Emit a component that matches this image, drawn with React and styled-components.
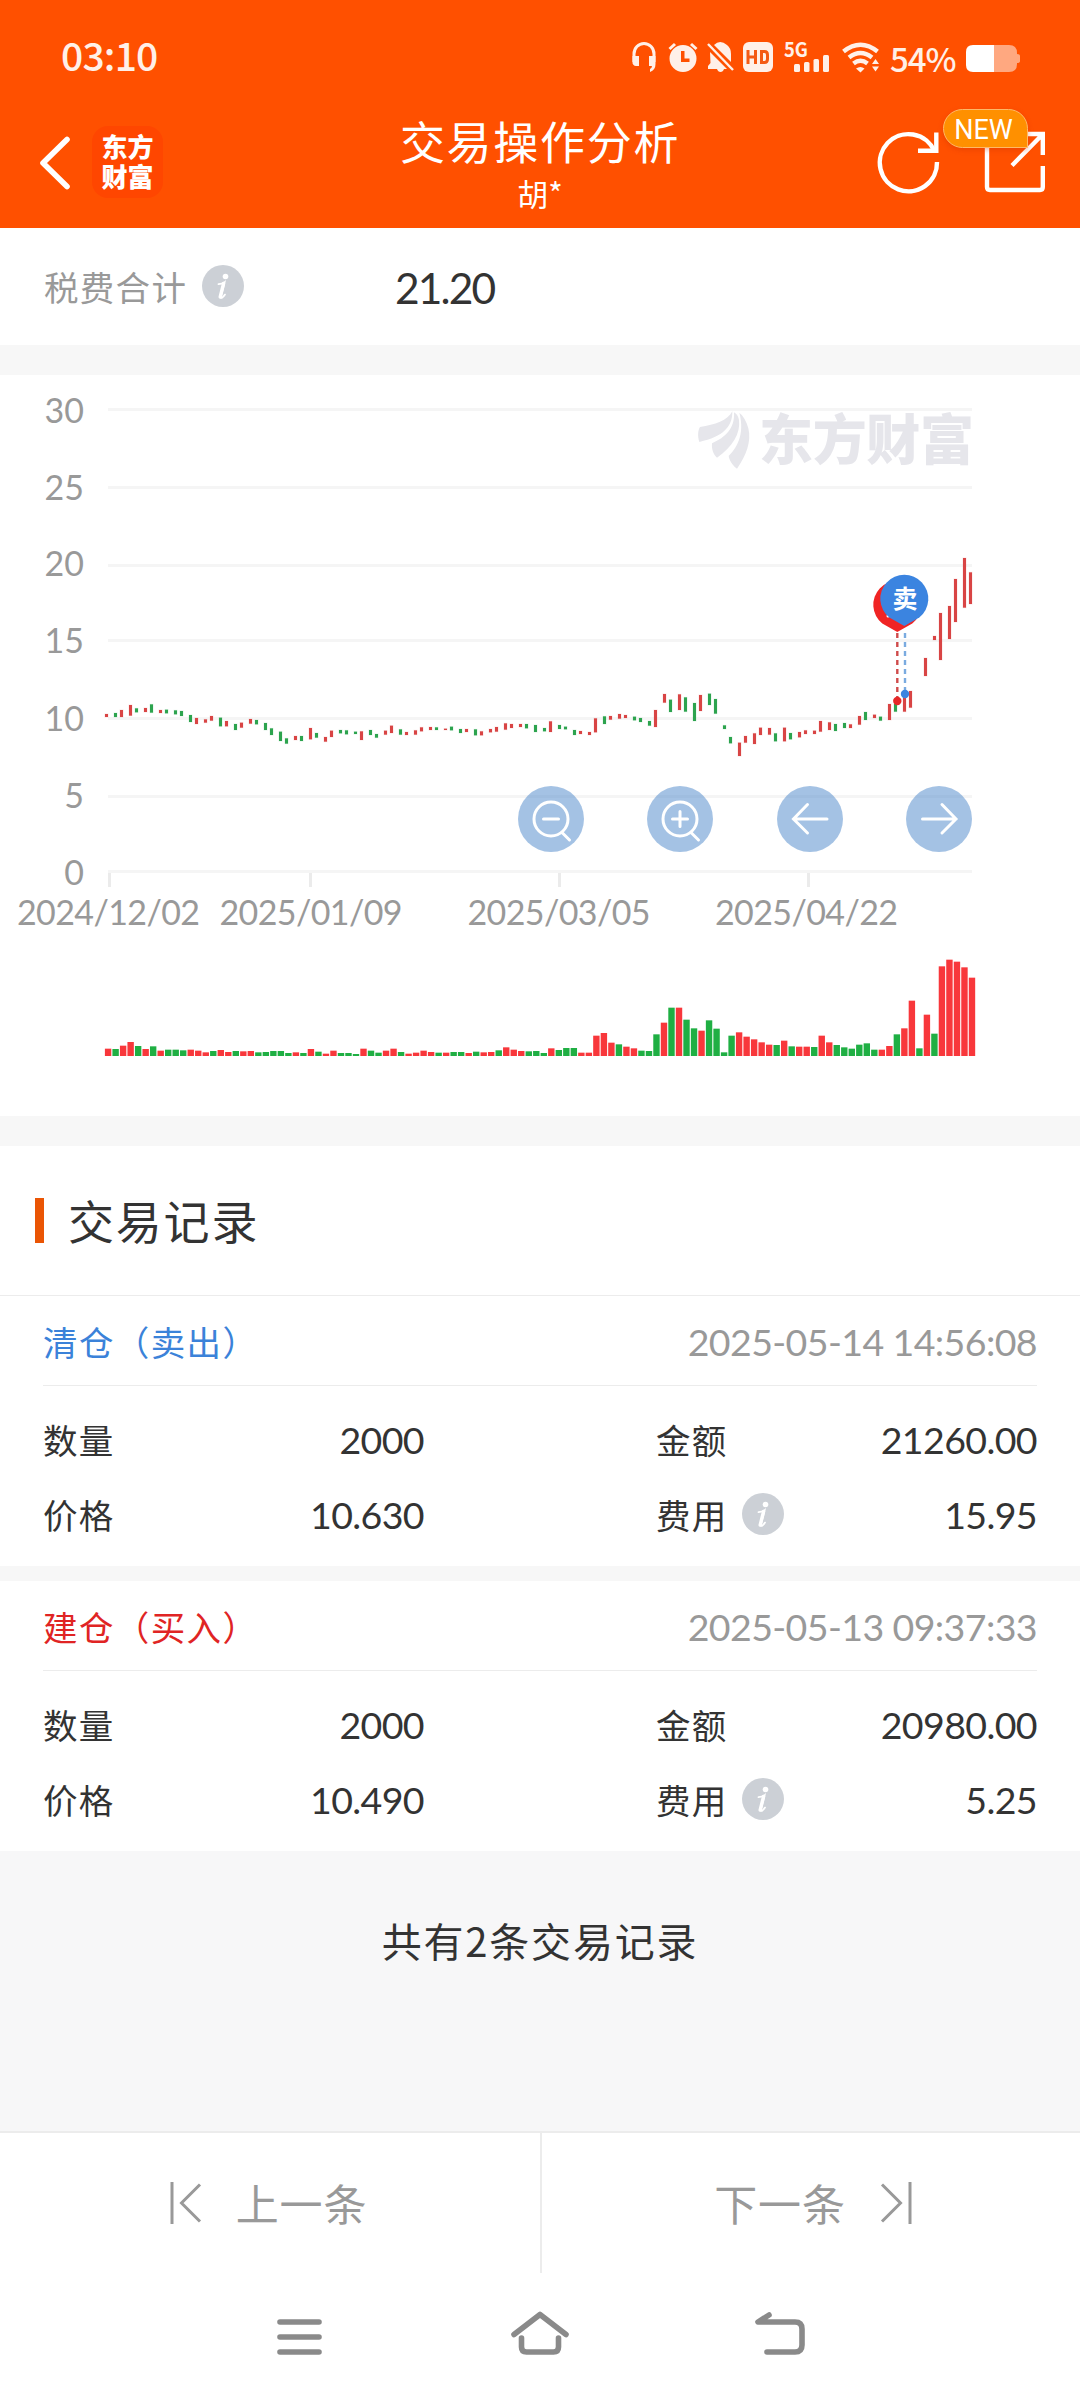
import React from "react";
import styled, { createGlobalStyle } from "styled-components";

const NUMERIC = 'Lato, "Noto Sans CJK SC", sans-serif';

const GlobalStyle = createGlobalStyle`
  * { box-sizing: border-box; }
  body { margin: 0; background: #f7f7f7; }
  body, text { font-family: "Noto Sans CJK SC", "Noto Sans", sans-serif; }
`;

const Page = styled.div`
  width: 1080px;
  height: 2400px;
  display: flex;
  flex-direction: column;
  background: #f7f7f7;
  color: #333;
  overflow: hidden;
  white-space: nowrap;
`;

const Header = styled.header`
  height: 228px;
  flex: none;
  display: flex;
  flex-direction: column;
  background: #ff5000;
  color: #fff;
`;

const StatusBar = styled.div`
  height: 109px;
  padding: 0 60px 0 61px;
  display: flex;
  align-items: flex-start;
  color: #fff0e8;
`;

const Clock = styled.span`
  margin-top: 35px;
  font-size: 39px;
  line-height: 38px;
  font-weight: 500;
  letter-spacing: -0.8px;
  flex: 1;
`;

const StatusIcon = styled.svg`
  flex: none;
  width: ${(p) => p.$w}px;
  height: 32px;
  margin: 41px ${(p) => p.$gap}px 0 0;
  overflow: visible;
  fill: currentColor;
`;

const BatteryText = styled.span`
  width: 76px;
  margin-top: 41px;
  font-size: 33px;
  line-height: 34px;
  font-weight: 500;
  letter-spacing: -1px;
`;

const TitleBar = styled.div`
  height: 119px;
  display: grid;
  grid-template-columns: 300px 1fr 300px;
`;

const TitleLeft = styled.div`
  display: flex;
  padding: 17px 0 0 38px;
`;

const BackIcon = styled.svg`
  width: 34px;
  height: 56px;
  margin: 9px 20px 0 0;
`;

const Brand = styled.div`
  width: 71px;
  height: 72px;
  padding: 7px 0 0;
  display: flex;
  flex-direction: column;
  align-items: center;
  border-radius: 16px;
  background: #ff4600;
  font: 900 26px/30px "Liberation Sans", "Noto Sans CJK SC", sans-serif;
`;

const TitleCenter = styled.div`
  display: flex;
  flex-direction: column;
  align-items: center;
`;

const Title = styled.h1`
  margin: 4px 0 0;
  font-size: 45px;
  line-height: 56px;
  font-weight: 400;
  letter-spacing: 1.7px;
`;

const Subtitle = styled.span`
  margin-top: 5px;
  font-size: 31px;
  line-height: 38px;
`;

const TitleRight = styled.div`
  position: relative;
  display: flex;
  padding: 20px 0 0 96px;
  gap: 42px;
`;

const ActionIcon = styled.svg`
  width: 66px;
  height: 68px;
  fill: none;
  stroke: #fff;
  stroke-width: 4.4;
`;

const NewBadge = styled.span`
  position: absolute;
  left: 163px;
  top: 0;
  width: 85px;
  height: 39px;
  padding-right: 4px;
  border: 1px solid #ffb866;
  border-radius: 20px 20px 0 20px;
  background: #ff9000;
  box-shadow: 0 2px 5px rgba(200, 50, 0, 0.35);
  font: 400 27px/40px Roboto, sans-serif;
  text-align: center;
`;

const FeeRow = styled.div`
  height: 117px;
  flex: none;
  display: flex;
  align-items: center;
  padding: 0 44px;
  background: #fff;
`;

const FeeLabel = styled.span`
  width: 158px;
  margin-top: -1px;
  color: #999;
  font-size: 34.5px;
  letter-spacing: 1.3px;
`;

const FeeValue = styled.span`
  margin: 1px 0 0 151px;
  font-family: ${NUMERIC};
  font-size: 42.5px;
  letter-spacing: -1.9px;
`;

const InfoSvg = styled.svg`
  width: 42px;
  height: 42px;
  flex: none;
  margin-top: ${(p) => p.$shift || 0}px;
`;

const Band = styled.div`
  height: ${(p) => p.$h}px;
  flex: none;
`;

const ChartPanel = styled.section`
  position: relative;
  height: 741px;
  flex: none;
  background: #fff;
`;

const ChartSvg = styled.svg`
  display: block;
  width: 1080px;
  height: 741px;
`;

const AxisText = styled.text`
  && { font-family: ${NUMERIC}; }
  font-size: ${(p) => p.$size}px;
  fill: #999;
`;

const ChartTools = styled.div`
  position: absolute;
  left: 518px;
  top: 411px;
  width: 454px;
  display: flex;
  justify-content: space-between;
`;

const ToolButton = styled.button`
  width: 66px;
  height: 66px;
  padding: 0;
  border: 0;
  border-radius: 50%;
  background: rgba(73, 133, 201, 0.5);
  svg {
    display: block;
    width: 66px;
    height: 66px;
    fill: none;
    stroke: #fff;
    stroke-width: 3;
    stroke-linecap: round;
  }
`;

const SectionHead = styled.div`
  height: 150px;
  flex: none;
  display: flex;
  align-items: center;
  padding: 0 35px;
  gap: 25px;
  border-bottom: 1px solid #ececec;
  background: #fff;
`;

const Accent = styled.i`
  width: 9px;
  height: 45px;
  background: #ea5504;
`;

const SectionTitle = styled.h2`
  margin: -3px 0 0 -1px;
  font-size: 46px;
  font-weight: 400;
  letter-spacing: 1.8px;
`;

const Record = styled.article`
  height: 270px;
  flex: none;
  padding: 0 43px;
  background: #fff;
`;

const RecordHead = styled.div`
  height: 90px;
  display: flex;
  justify-content: space-between;
  align-items: center;
  border-bottom: 1px solid #ececec;
`;

const RecordKind = styled.span`
  color: ${(p) => p.$color};
  font-size: 34.5px;
  letter-spacing: 1.4px;
`;

const RecordTime = styled.time`
  margin-top: 2px;
  color: #999;
  font-family: ${NUMERIC};
  font-size: 37.5px;
  letter-spacing: -0.6px;
`;

const RecordGrid = styled.div`
  display: grid;
  grid-template-columns: 381px 381px;
  grid-auto-rows: 75px;
  justify-content: space-between;
  padding-top: 15px;
`;

const Field = styled.div`
  display: flex;
  align-items: center;
`;

const FieldName = styled.span`
  width: 86px;
  font-size: 34.5px;
  letter-spacing: 1.3px;
`;

const FieldValue = styled.span`
  margin: 2px 0 0 auto;
  font-family: ${NUMERIC};
  font-size: 37.5px;
  letter-spacing: -0.6px;
`;

const Summary = styled.div`
  flex: 1;
  padding-top: 60px;
  background: #f7f7f8;
  font-size: 40px;
  line-height: 58px;
  letter-spacing: 1.8px;
  text-align: center;
`;

const Pager = styled.div`
  height: 142px;
  flex: none;
  display: grid;
  grid-template-columns: 542px 538px;
  border-top: 2px solid #ececec;
  background: #fff;
`;

const PageButton = styled.div`
  display: flex;
  align-items: center;
  justify-content: center;
  gap: 34px;
  padding-left: ${(p) => (p.$divided ? 0 : 4)}px;
  padding-right: ${(p) => (p.$divided ? 3 : 0)}px;
  color: #999;
  font-size: 43px;
  letter-spacing: 0.8px;
  border-right: ${(p) => (p.$divided ? "2px solid #ececec" : "0")};
  span { margin-top: -2px; }
  svg {
    width: 32px;
    height: 44px;
    fill: none;
    stroke: #999;
    stroke-width: 3;
  }
`;

const SystemNav = styled.nav`
  height: 127px;
  flex: none;
  display: flex;
  justify-content: space-between;
  padding: 35px 271px 0 270px;
  background: #fff;
  svg {
    width: 60px;
    height: 50px;
    fill: none;
    stroke: #8a8a8a;
    stroke-width: 5.6;
    stroke-linecap: round;
    stroke-linejoin: round;
  }
`;

/* direction, top and bottom of each daily candle, on a scale of three units per pixel */
const CANDLES = [
  "r222,231 g219,231 r210,231 r195,227 g205,217 r204,216 g193,218 r210,219 g209,220 g211,223 g213,228 g225,246 r234,252 r238,248 r228,242 g233,259 r243,259 g252,270 r248,263 r237,251",
  "g240,253 g249,270 g265,285 g275,303 g295,311 r288,300 g288,303 r264,298 g279,293 r291,305 r272,291 g270,280 g271,283 g275,282 r274,300 g270,285 g282,293 r272,284 r257,279 g268,284",
  "r276,285 r271,284 r262,274 r261,270 g262,270 r266,270 g260,271 g267,279 r267,276 g268,286 r274,286 r267,277 r261,275 r250,269 r252,264 r252,261 g252,265 g255,276 g264,274 r244,276",
  "g255,267 g260,268 g270,285 r273,282 r276,285 r235,277 g229,252 r228,239 r222,236 r225,234 g230,241 g234,246 g243,257 r210,261 r162,188 g179,216 r163,210 g172,215 g189,243 r165,213",
  "g161,195 g177,221 g256,267 g291,310 r308,348 r288,308 r280,312 r263,285 r264,284 g280,304 r263,304 g279,298 r276,292 r271,282 r272,282 r243,275 r247,270 g252,273 g249,264 r253,264",
  "r228,254 g216,240 r224,234 g230,242 r192,240 g192,215 r170,215 r153,203 r0,0 r54,108 r-12,0 r-81,60 r-102,-3 r-183,-54 r-246,-97 r-203,-108",
]
  .join(" ")
  .split(" ")
  .map((s) => {
    const [top, bottom] = s.slice(1).split(",").map(Number);
    return { up: s[0] === "r", top: 265 + top / 3, bottom: 265 + bottom / 3 };
  });

const candleX = (i) =>
  i < 58
    ? 105 + 15 * Math.floor(i / 2) + (i % 2) * 9
    : 543 + 15 * Math.floor((i - 58) / 2) + (i % 2) * 6;

const VOLUMES = (
  "r22 g21 r31 r42 g30 r21 g29 r16 g19 g19 g17 r19 r16 r11 g15 r18 r12 g15 r14 r15 " +
  "g11 g12 g15 g15 g9 r11 g9 r21 g13 r7 r16 g9 g9 g6 r22 g16 g10 r16 r22 g12 " +
  "r7 r10 r16 r12 g10 r10 g12 g12 r9 g13 r11 r12 g17 r26 r19 r15 g14 g15 g9 r23 " +
  "g18 g24 g24 r10 r10 r61 r69 r40 g35 r28 r23 g16 g15 g65 r100 g145 r145 g109 g83 r76 " +
  "g107 g82 g11 g61 r71 r58 r50 r41 r34 g33 r46 g29 r28 r28 g27 r61 r41 g33 g26 g22 " +
  "g34 g38 g19 r19 r30 g65 r83 r166 g23 r124 g67 r269 r289 r283 r266 r235"
)
  .split(" ")
  .map((s) => ({ up: s[0] === "r", h: Number(s.slice(1)) / 3 }));

/* value, line position, baseline of the label */
const GRID = [
  [30, 33, 47.5],
  [25, 111, 124.5],
  [20, 189, 201],
  [15, 264, 278],
  [10, 342, 355.5],
  [5, 420, 432.5],
  [0, 495, 509.5],
];

const DATES = [
  ["2024/12/02", 108, 109],
  ["2025/01/09", 310.5, 310],
  ["2025/03/05", 558.5, 559],
  ["2025/04/22", 806, 808],
];

function Info({ shift }) {
  return (
    <InfoSvg viewBox="0 0 42 42" $shift={shift}>
      <circle cx="21" cy="21" r="21" fill="#ccd0d6" />
      <circle cx="23.5" cy="11.5" r="2.8" fill="#fff" />
      <path
        d="M16.5 19.2 Q20 19 22.6 17.2 L19 31.2 Q18.6 33.4 20 32.8 Q21.5 32 23 29.6"
        fill="none"
        stroke="#fff"
        strokeWidth="1.8"
        strokeLinecap="round"
      />
      <path d="M21.6 18.5 L18.200 32" stroke="#fff" strokeWidth="3.4" strokeLinecap="round" />
    </InfoSvg>
  );
}

function Pin({ x, y, color, children }) {
  return (
    <g>
      <path
        d={`M${x} ${y + 27} L${x - 15} ${y + 18.5} A24 24 0 1 1 ${x + 15} ${y + 18.5} Z`}
        fill={color}
      />
      {children}
    </g>
  );
}

function TradeChart() {
  return (
    <ChartSvg viewBox="0 0 1080 741">
      {GRID.map(([label, y, baseline]) => (
        <g key={label}>
          <rect x="108" y={y} width="864" height="3" fill="#f5f5f5" />
          <AxisText $size={34} x="84" y={baseline} textAnchor="end">
            {label}
          </AxisText>
        </g>
      ))}
      <g fill="#e6e6eb">
        <g transform="translate(660 5) scale(0.33333)">
          <path d="M118 186 C112 168 114 150 120 141 C165 134 203 122 217 94 C218 140 190 170 118 186Z" />
          <path d="M222 97 C225 145 197 172 156 190 C154 210 162 225 171 233 C218 200 242 160 237 120 C235 108 229 101 222 97Z" />
          <path d="M238 98 C256 165 228 205 206 228 C209 246 222 260 231 266 C258 228 275 185 265 145 C260 124 250 108 238 98Z" />
        </g>
        <text x="759" y="85" fontSize="54" fontWeight="900" textLength="215">
          东方财富
        </text>
      </g>
      {DATES.map(([label, center, tick]) => (
        <g key={label}>
          <rect x={tick - 1} y="498" width="3" height="14" fill="#ebebeb" />
          <AxisText $size={34} x={center - 91} y="550" textLength="183">
            {label}
          </AxisText>
        </g>
      ))}
      {CANDLES.map((c, i) => (
        <rect
          key={i}
          x={candleX(i)}
          y={c.top}
          width="3"
          height={c.bottom - c.top}
          fill={c.up ? "#d94545" : "#2da44e"}
          stroke={c.up ? "#d94545" : "#2da44e"}
          strokeOpacity={c.bottom > c.top ? 0.15 : 0}
        />
      ))}
      {VOLUMES.map((v, i) => (
        <rect
          key={i}
          x={104.9 + i * 7.512}
          y={681 - v.h}
          width="6.4"
          height={v.h}
          fill={v.up ? "#f8373b" : "#1faf43"}
        />
      ))}
      <path d="M897.3 258V324" stroke="#cf4a4a" strokeWidth="2.4" strokeDasharray="5 4" />
      <path d="M905 258V316" stroke="#7aabe0" strokeWidth="2.4" strokeDasharray="5 4" />
      <circle cx="897.3" cy="326" r="4.2" fill="#e62828" />
      <circle cx="905" cy="319" r="4.2" fill="#3b84e0" />
      <Pin x={897.3} y={230} color="#f02424">
        <circle cx="888" cy="241" r="1.5" fill="#fff" />
      </Pin>
      <Pin x={904.3} y={224} color="#3b84e0">
        <text x="905" y="233" fontSize="25" fontWeight="700" fill="#fff" textAnchor="middle">
          卖
        </text>
      </Pin>
    </ChartSvg>
  );
}

function TradeRecord({ kind, color, time, quantity, amount, price, fee }) {
  return (
    <Record>
      <RecordHead>
        <RecordKind $color={color}>{kind}</RecordKind>
        <RecordTime>{time}</RecordTime>
      </RecordHead>
      <RecordGrid>
        <Field>
          <FieldName>数量</FieldName>
          <FieldValue>{quantity}</FieldValue>
        </Field>
        <Field>
          <FieldName>金额</FieldName>
          <FieldValue>{amount}</FieldValue>
        </Field>
        <Field>
          <FieldName>价格</FieldName>
          <FieldValue>{price}</FieldValue>
        </Field>
        <Field>
          <FieldName>费用</FieldName>
          <Info />
          <FieldValue>{fee}</FieldValue>
        </Field>
      </RecordGrid>
    </Record>
  );
}

function StatusIcons() {
  return (
    <>
      <StatusIcon $w={24} $gap={12} viewBox="0 0 24 32">
        <path
          d="M2 21V13A10 10.5 0 0 1 22 13V21"
          fill="none"
          stroke="currentColor"
          strokeWidth="3"
        />
        <path d="M0.5 15H7V25H4A3.5 3.5 0 0 1 .5 21ZM17 15H23.5V23Q23.500 29 18 31V28Q20 27 20 25H17Z" />
      </StatusIcon>
      <StatusIcon $w={30} $gap={9} viewBox="0 0 30 32">
        <path fillRule="evenodd" d="M15 4A13.500 13.500 0 1 0 15 31A13.500 13.500 0 0 0 15 4ZM13 10H16.500V17.500H21.500V21H13Z" />
        <path d="M1.500 8L7 3M28.500 8L23 3" stroke="currentColor" strokeWidth="3" />
      </StatusIcon>
      <StatusIcon $w={27} $gap={9} viewBox="0 0 27 32">
        <path d="M3 11L20 28H17Q16 31 13.500 31T10 28H1V25L3.500 22ZM7 4Q13-2 20 4Q24 7 24 13V21Z" />
        <path d="M1 3L26 29" stroke="currentColor" strokeWidth="2.4" />
      </StatusIcon>
      <StatusIcon $w={30} $gap={12} viewBox="0 0 30 32">
        <rect y="1" width="30" height="30" rx="6" />
        <path
          d="M5 9V23M12.500 9V23M5 16H12.500M18.500 10.500V21.500H21.500Q24.500 21.500 24.500 18V14Q24.500 10.500 21.500 10.500Z"
          fill="none"
          stroke="#f45a14"
          strokeWidth="3"
        />
      </StatusIcon>
      <StatusIcon $w={45} $gap={12} viewBox="0 0 45 32">
        <text x="-1" y="16" fontSize="20.5" fontWeight="700" textLength="24" lengthAdjust="spacingAndGlyphs">
          5G
        </text>
        <rect x="9" y="23" width="6" height="8" rx="1.500" />
        <rect x="19" y="21" width="5.500" height="10" rx="1.500" />
        <rect x="28.500" y="18" width="5.500" height="13" rx="1.500" />
        <rect x="38" y="14" width="6" height="17" rx="1.500" />
      </StatusIcon>
      <StatusIcon $w={37} $gap={11} viewBox="0 0 37 32">
        <g fill="none" stroke="currentColor" strokeWidth="4.400">
          <path d="M1.500 10.500Q18.500-3 35.500 10.500" />
          <path d="M7 16.500Q18.500 7.500 30 16.500" />
          <path d="M11.500 22.500Q18.500 17 25.500 22.500" />
        </g>
        <path d="M14 27.500Q18.500 24.500 22.500 27.500L18.500 31.500ZM30 23L33.500 18L37 23ZM30 25.500H37L33.500 30.500Z" />
      </StatusIcon>
    </>
  );
}

export default function App() {
  return (
    <Page>
      <GlobalStyle />
      <Header>
        <StatusBar>
          <Clock>03:10</Clock>
          <StatusIcons />
          <BatteryText>54%</BatteryText>
          <StatusIcon $w={54} $gap={0} viewBox="0 0 54 32">
            <path d="M26 4H43Q51 4 51 12V13Q54 13 54 15V20Q54 22 51 22V23Q51 31 43 31H26Z" fill="#ffa880" />
            <path d="M28 4H7Q0 4 0 11V24Q0 31 7 31H28Z" fill="#fff" />
          </StatusIcon>
        </StatusBar>
        <TitleBar>
          <TitleLeft>
            <BackIcon viewBox="0 0 34 56">
              <path
                d="M29 4.500L5 28L29 51.500"
                fill="none"
                stroke="#fff"
                strokeWidth="5.6"
                strokeLinecap="round"
                strokeLinejoin="round"
              />
            </BackIcon>
            <Brand>
              <span>东方</span>
              <span>财富</span>
            </Brand>
          </TitleLeft>
          <TitleCenter>
            <Title>交易操作分析</Title>
            <Subtitle>胡*</Subtitle>
          </TitleCenter>
          <TitleRight>
            <ActionIcon viewBox="0 0 66 68">
              <path d="M61 33A28.600 28.600 0 1 1 58.500 22" />
              <path d="M60.300 3.500V21.700H42" />
            </ActionIcon>
            <ActionIcon viewBox="0 0 66 68">
              <path d="M40 5H58.800V26M58.800 37V58Q58.800 61 56 61H6Q3 61 3 58V12M58 6L28 36.500" />
            </ActionIcon>
            <NewBadge>NEW</NewBadge>
          </TitleRight>
        </TitleBar>
      </Header>

      <FeeRow>
        <FeeLabel>税费合计</FeeLabel>
        <Info shift={-2} />
        <FeeValue>21.20</FeeValue>
      </FeeRow>
      <Band $h={30} />

      <ChartPanel>
        <TradeChart />
        <ChartTools>
          <ToolButton>
            <svg viewBox="0 0 66 66">
              <circle cx="33" cy="33" r="17" />
              <path d="M25.500 33H40.500M44.500 47L51.500 54" />
            </svg>
          </ToolButton>
          <ToolButton>
            <svg viewBox="0 0 66 66">
              <circle cx="33" cy="33" r="17" />
              <path d="M25.500 33H40.500M33 25.500V40.500M44.500 47L51.500 54" />
            </svg>
          </ToolButton>
          <ToolButton>
            <svg viewBox="0 0 66 66">
              <path d="M50 33H16.500M30.500 18.500L16.500 33L30.500 47" />
            </svg>
          </ToolButton>
          <ToolButton>
            <svg viewBox="0 0 66 66">
              <path d="M16.500 33H50M36 18.500L50 33L36 47" />
            </svg>
          </ToolButton>
        </ChartTools>
      </ChartPanel>
      <Band $h={30} />

      <SectionHead>
        <Accent />
        <SectionTitle>交易记录</SectionTitle>
      </SectionHead>
      <TradeRecord
        kind="清仓（卖出）"
        color="#3b82d9"
        time="2025-05-14 14:56:08"
        quantity="2000"
        amount="21260.00"
        price="10.630"
        fee="15.95"
      />
      <Band $h={15} />
      <TradeRecord
        kind="建仓（买入）"
        color="#e02424"
        time="2025-05-13 09:37:33"
        quantity="2000"
        amount="20980.00"
        price="10.490"
        fee="5.25"
      />
      <Summary>共有2条交易记录</Summary>

      <Pager>
        <PageButton $divided>
          <svg viewBox="0 0 32 44">
            <path d="M2 1V43M30 3.500L11.500 22L30 40.500" />
          </svg>
          <span>上一条</span>
        </PageButton>
        <PageButton>
          <span>下一条</span>
          <svg viewBox="0 0 32 44">
            <path d="M30 1V43M2 3.500L20.500 22L2 40.500" />
          </svg>
        </PageButton>
      </Pager>
      <SystemNav>
        <svg viewBox="0 0 60 50">
          <path d="M10 14H49M10 29H49M10 44H49" />
        </svg>
        <svg viewBox="0 0 60 50">
          <path d="M4 26.500L30 6.500L56 26.500M11.500 30V39Q11.500 44 16.500 44H43.500Q48.500 44 48.500 39V30" />
        </svg>
        <svg viewBox="0 0 60 50">
          <path d="M20 7L9 14H46Q53 14 53 21V37Q53 44 46 44H18" />
        </svg>
      </SystemNav>
    </Page>
  );
}
